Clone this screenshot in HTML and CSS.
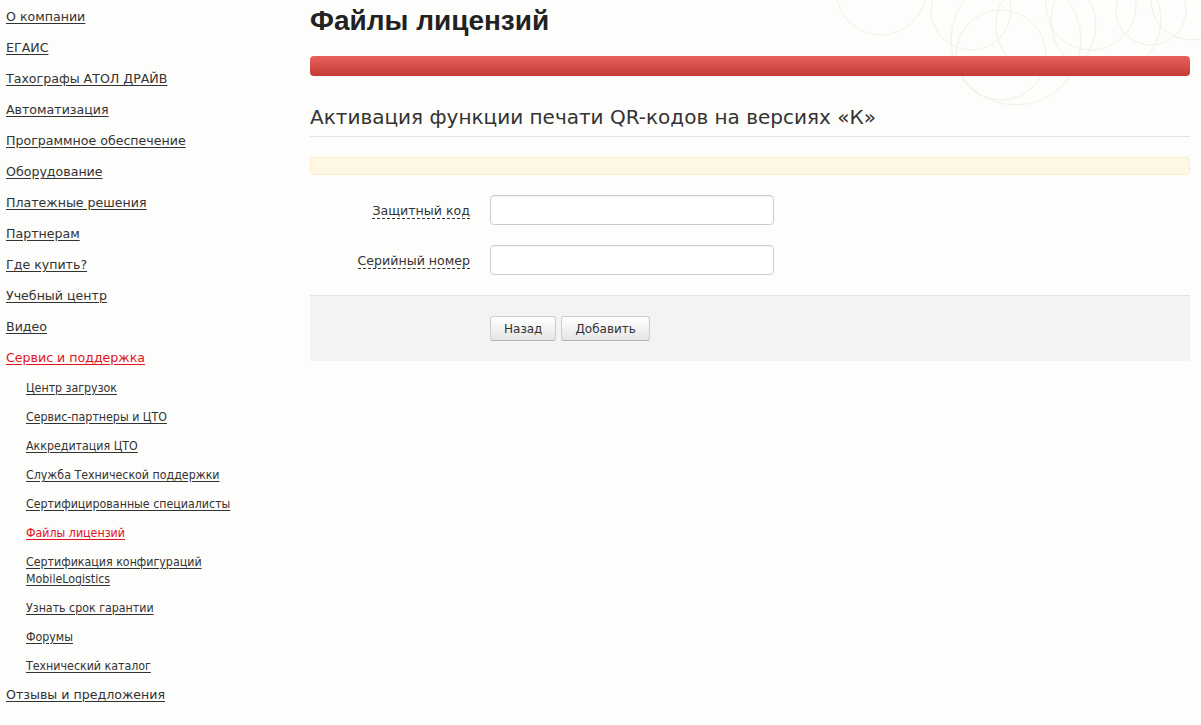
FILE: index.html
```html
<!DOCTYPE html>
<html lang="ru">
<head>
  <meta charset="UTF-8" />
  <title>Файлы лицензий</title>
  <link rel="stylesheet" href="styles.css">
</head>
<body>
  <svg class="ornament" width="380" height="110" viewBox="0 0 380 110">
    <g fill="none" stroke="#f1eeea" stroke-width="1">
      <circle cx="60" cy="-10" r="45" />
      <circle cx="150" cy="10" r="40" />
      <circle cx="195" cy="40" r="65" />
      <circle cx="180" cy="55" r="45" />
      <circle cx="225" cy="25" r="50" />
      <circle cx="270" cy="5" r="45" />
      <circle cx="285" cy="20" r="55" />
      <circle cx="330" cy="10" r="35" />
      <circle cx="370" cy="0" r="40" />
    </g>
  </svg>

  <div class="page">
    <aside class="sidebar">
      <ul class="menu">
        <li><a href="#">О компании</a></li>
        <li><a href="#">ЕГАИС</a></li>
        <li><a href="#">Тахографы АТОЛ ДРАЙВ</a></li>
        <li><a href="#">Автоматизация</a></li>
        <li><a href="#">Программное обеспечение</a></li>
        <li><a href="#">Оборудование</a></li>
        <li><a href="#">Платежные решения</a></li>
        <li><a href="#">Партнерам</a></li>
        <li><a href="#">Где купить?</a></li>
        <li><a href="#">Учебный центр</a></li>
        <li><a href="#">Видео</a></li>
        <li class="open">
          <a href="#" class="active">Сервис и поддержка</a>
          <ul class="submenu">
            <li><a href="#">Центр загрузок</a></li>
            <li><a href="#">Сервис-партнеры и ЦТО</a></li>
            <li><a href="#">Аккредитация ЦТО</a></li>
            <li><a href="#">Служба Технической поддержки</a></li>
            <li><a href="#">Сертифицированные специалисты</a></li>
            <li><a href="#" class="active">Файлы лицензий</a></li>
            <li><a href="#">Сертификация конфигураций MobileLogistics</a></li>
            <li><a href="#">Узнать срок гарантии</a></li>
            <li><a href="#">Форумы</a></li>
            <li><a href="#">Технический каталог</a></li>
          </ul>
        </li>
        <li><a href="#">Отзывы и предложения</a></li>
      </ul>
    </aside>

    <main class="content">
      <h1 class="page-title">Файлы лицензий</h1>
      <div class="red-bar"></div>

      <h2 class="form-title">Активация функции печати QR-кодов на версиях «К»</h2>
      <div class="alert"></div>

      <form class="form">
        <div class="form-row">
          <label class="form-label"><span>Защитный код</span></label>
          <input type="text" class="form-input">
        </div>
        <div class="form-row">
          <label class="form-label"><span>Серийный номер</span></label>
          <input type="text" class="form-input">
        </div>
        <div class="form-actions">
          <button type="button" class="btn">Назад</button>
          <button type="button" class="btn">Добавить</button>
        </div>
      </form>
    </main>
  </div>
</body>
</html>
```

FILE: styles.css
```css
* {
  box-sizing: border-box;
  margin: 0;
  padding: 0;
}

body {
  background-color: #fdfdfb;
  font-family: "DejaVu Sans", Verdana, sans-serif;
  color: #333;
  position: relative;
}

.ornament {
  position: absolute;
  top: 0;
  right: 0;
  z-index: 0;
}

.page {
  display: flex;
  position: relative;
  z-index: 1;
}

.sidebar {
  width: 310px;
  padding: 9px 60px 0 6px;
}

.menu {
  list-style: none;
}

.menu > li {
  margin-bottom: 16px;
  font-size: 12.6px;
  line-height: 15px;
}

.menu > li.open {
  margin-bottom: 12px;
}

.menu a {
  color: #333;
  text-decoration: underline;
  text-underline-offset: 2px;
}

.menu a.active {
  color: #e3121f;
}

.submenu {
  list-style: none;
  padding-left: 20px;
  margin-top: 15px;
}

.submenu li {
  font-family: "DejaVu Sans Condensed", "DejaVu Sans", sans-serif;
  font-size: 12.3px;
  line-height: 17px;
  margin-bottom: 12px;
}

.content {
  width: 880px;
}

.page-title {
  font-family: "Liberation Sans", Arial, sans-serif;
  font-size: 28px;
  font-weight: bold;
  color: #222;
  line-height: 32px;
  padding-top: 5px;
}

.red-bar {
  height: 20px;
  margin-top: 19px;
  border-radius: 4px;
  background: linear-gradient(#e8625d, #c43b35);
}

.form-title {
  font-size: 20px;
  font-weight: normal;
  color: #333;
  line-height: 24px;
  margin-top: 29px;
  padding-bottom: 7px;
  border-bottom: 1px solid #e5e5e5;
}

.alert {
  height: 18px;
  margin-top: 20px;
  background-color: #fef7e4;
  border: 1px solid #fbeccc;
  border-radius: 4px;
}

.form {
  margin-top: 20px;
}

.form-row {
  display: flex;
  align-items: center;
  margin-bottom: 20px;
}

.form-label {
  width: 180px;
  padding-right: 20px;
  text-align: right;
  font-size: 12.6px;
}

.form-label span {
  border-bottom: 1px dashed #333;
}

.form-input {
  width: 284px;
  height: 30px;
  border: 1px solid #ccc;
  border-radius: 4px;
  background-color: #fff;
  box-shadow: inset 0 1px 1px rgba(0, 0, 0, 0.05);
}

.form-actions {
  display: flex;
  gap: 5px;
  padding: 20px 0 20px 180px;
  background-color: #f4f3f3;
  border-top: 1px solid #e5e5e5;
}

.btn {
  height: 25px;
  padding: 0 13px;
  font-family: "DejaVu Sans", Verdana, sans-serif;
  font-size: 12px;
  color: #333;
  background: linear-gradient(#fff, #e6e6e6);
  border: 1px solid #ccc;
  border-bottom-color: #b3b3b3;
  border-radius: 3px;
  cursor: pointer;
}
```
